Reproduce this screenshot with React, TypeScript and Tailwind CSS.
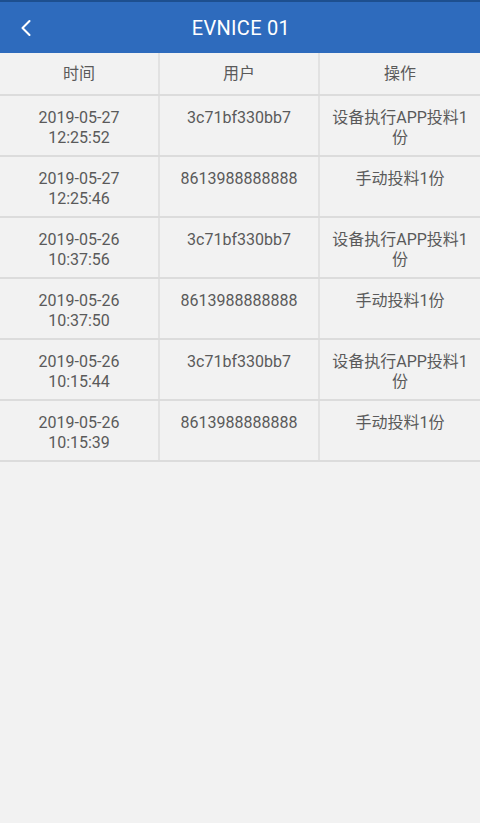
import { ChevronLeft } from "lucide-react";

const rows = [
  { date: "2019-05-27", time: "12:25:52", user: "3c71bf330bb7", op: "设备执行APP投料1份" },
  { date: "2019-05-27", time: "12:25:46", user: "8613988888888", op: "手动投料1份" },
  { date: "2019-05-26", time: "10:37:56", user: "3c71bf330bb7", op: "设备执行APP投料1份" },
  { date: "2019-05-26", time: "10:37:50", user: "8613988888888", op: "手动投料1份" },
  { date: "2019-05-26", time: "10:15:44", user: "3c71bf330bb7", op: "设备执行APP投料1份" },
  { date: "2019-05-26", time: "10:15:39", user: "8613988888888", op: "手动投料1份" },
];

export default function App() {
  return (
    <div
      className="w-[480px] h-[823px] bg-[#f2f2f2] text-[#5a5a5a] overflow-hidden"
      style={{ fontFamily: 'Roboto, "Noto Sans CJK SC", sans-serif' }}
    >
      <div className="h-[2px] bg-[#1d4f8f]" />
      <header className="h-[51px] bg-[#2e6bbd] flex items-center relative">
        <button type="button" className="absolute left-[12px] top-[12px] text-white" aria-label="back">
          <ChevronLeft size={28} strokeWidth={1.8} />
        </button>
        <h1 className="flex-1 text-center text-white text-[20px] tracking-[0.3px] pl-[2px]">EVNICE 01</h1>
      </header>

      <div className="grid grid-cols-3 h-[43px] border-b-2 border-[#dcdcdc] text-[16px]">
        <div className="flex items-center justify-center border-r-2 border-[#e2e2e2]">时间</div>
        <div className="flex items-center justify-center border-r-2 border-[#e2e2e2]">用户</div>
        <div className="flex items-center justify-center">操作</div>
      </div>

      {rows.map((r, i) => (
        <div key={i} className="grid grid-cols-3 h-[61px] border-b-2 border-[#dcdcdc] text-[16px] leading-[20px]">
          <div className="border-r-2 border-[#e2e2e2] pt-[12px] text-center">
            <div>{r.date}</div>
            <div>{r.time}</div>
          </div>
          <div className="border-r-2 border-[#e2e2e2] pt-[12px] text-center">{r.user}</div>
          <div className="pt-[12px] px-[8px] text-center">{r.op}</div>
        </div>
      ))}
    </div>
  );
}
